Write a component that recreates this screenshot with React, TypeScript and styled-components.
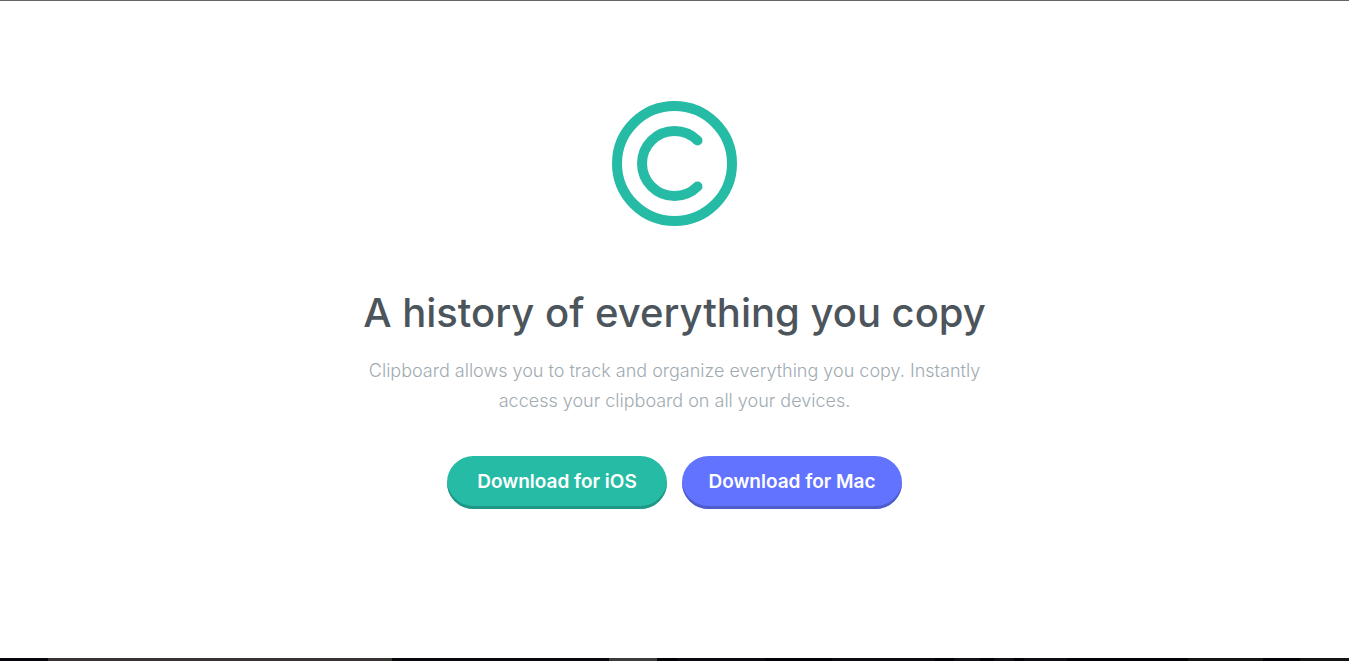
import React from "react";
import styled, { createGlobalStyle } from "styled-components";

const GlobalStyle = createGlobalStyle`
  * { box-sizing: border-box; }
  body {
    margin: 0;
    background: #fff;
    font-family: Inter, "Liberation Sans", sans-serif;
  }
`;

const Page = styled.div`
  min-height: 100vh;
  display: flex;
  flex-direction: column;
  border-top: 1px solid #67656a;
`;

const Hero = styled.main`
  flex: 1;
  display: flex;
  flex-direction: column;
  align-items: center;
  padding: 100px 24px;
  text-align: center;
`;

const Logo = styled.svg`
  display: block;
  width: 125px;
  height: 125px;
  fill: none;
  stroke: #26bba5;
  stroke-width: 10;
  stroke-linecap: round;
`;

const Title = styled.h1`
  margin: 62px 0 0;
  color: #4c545c;
  font-size: 40px;
  font-weight: 500;
  line-height: 50px;
`;

const Lead = styled.p`
  max-width: 640px;
  margin: 18px 0 0;
  color: #9fabb2;
  font-size: 18px;
  font-weight: 300;
  line-height: 30px;
`;

const Actions = styled.div`
  display: flex;
  flex-wrap: wrap;
  justify-content: center;
  gap: 15px;
  margin-top: 40px;
`;

const DownloadButton = styled.button<{ $color: string; $edge: string }>`
  width: 220px;
  height: 53px;
  padding: 0 0 2px;
  border: 0;
  border-radius: 27px;
  background: ${(p) => p.$color};
  box-shadow: inset 0 -3px 0 ${(p) => p.$edge};
  color: #fff;
  font: inherit;
  font-size: 19px;
  font-weight: 600;
  cursor: pointer;
`;

const BottomStrip = styled.div`
  display: flex;
  height: 3px;
  background: #05050a;
`;

const Segment = styled.div<{ $size: number; $color: string }>`
  flex: ${(p) => p.$size} 1 0;
  background: ${(p) => p.$color};
`;

const segments = [
  { size: 48, color: "#05050c" },
  { size: 344, color: "#373333" },
  { size: 217, color: "#07080d" },
  { size: 48, color: "#3d3b3d" },
  { size: 20, color: "#020004" },
  { size: 88, color: "#090a0d" },
  { size: 67, color: "#020004" },
  { size: 103, color: "#0a0b0e" },
  { size: 19, color: "#020004" },
  { size: 26, color: "#101114" },
  { size: 14, color: "#020004" },
  { size: 20, color: "#101114" },
  { size: 10, color: "#020004" },
  { size: 43, color: "#0d0e11" },
  { size: 121, color: "#020004" },
  { size: 75, color: "#121315" },
  { size: 37, color: "#020004" },
  { size: 49, color: "#121315" },
];

export default function App() {
  return (
    <>
      <GlobalStyle />
      <Page>
        <Hero>
          <Logo viewBox="0 0 125 125" role="img" aria-label="Clipboard">
            <circle cx="62.5" cy="62.5" r="57.5" />
            <path d="M85.5 39.5a32.5 32.5 0 1 0 0 46" />
          </Logo>
          <Title>A history of everything you copy</Title>
          <Lead>
            Clipboard allows you to track and organize everything you copy.
            Instantly access your clipboard on all your devices.
          </Lead>
          <Actions>
            <DownloadButton type="button" $color="#26bba5" $edge="#209686">
              Download for iOS
            </DownloadButton>
            <DownloadButton type="button" $color="#6173ff" $edge="#4f5dcb">
              Download for Mac
            </DownloadButton>
          </Actions>
        </Hero>
        <BottomStrip>
          {segments.map((s, i) => (
            <Segment key={i} $size={s.size} $color={s.color} />
          ))}
        </BottomStrip>
      </Page>
    </>
  );
}
